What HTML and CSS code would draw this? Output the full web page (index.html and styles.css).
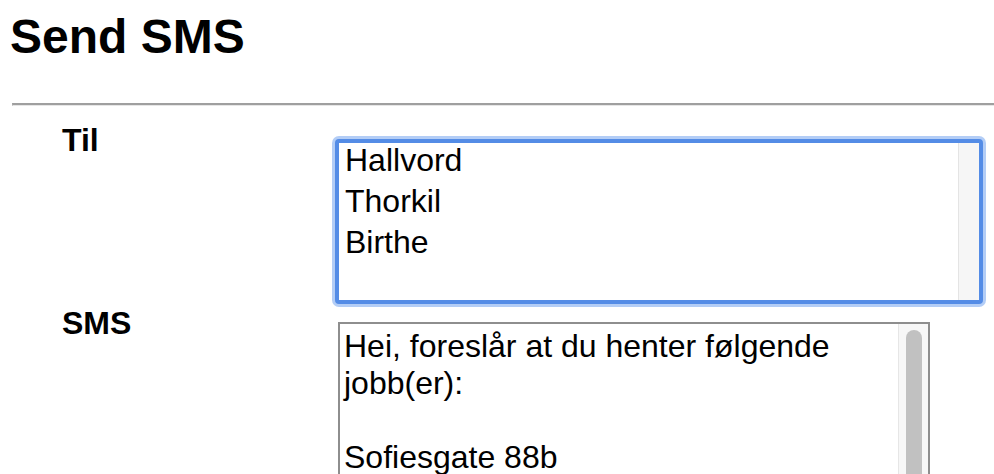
FILE: index.html
```html
<!DOCTYPE html>
<html lang="no">
<head>
<meta charset="utf-8">
<title>Send SMS</title>
<link rel="stylesheet" href="styles.css">
</head>
<body>
<h1 class="title">Send SMS</h1>
<hr class="rule">
<form class="sms-form">
  <label class="field-label" for="to">Til</label>
  <div class="listbox" id="to" role="listbox" aria-multiselectable="true" tabindex="0">
    <div class="listbox-options">
      <div class="option" role="option">Hallvord</div>
      <div class="option" role="option">Thorkil</div>
      <div class="option" role="option">Birthe</div>
    </div>
    <div class="listbox-track"></div>
  </div>
  <label class="field-label" for="sms">SMS</label>
  <div class="message-box">
    <textarea class="message" id="sms">Hei, foreslår at du henter følgende jobb(er):

Sofiesgate 88b</textarea>
    <div class="scroll-track"><div class="scroll-thumb"></div></div>
  </div>
</form>
</body>
</html>
```
FILE: styles.css
```css
html, body {
  margin: 0;
  padding: 0;
  overflow: hidden;
  background: #ffffff;
}

body {
  font-family: "Liberation Sans", Arial, Helvetica, sans-serif;
  color: #000000;
}

.title {
  margin: 9px 0 0 10px;
  font-size: 48px;
  line-height: 56px;
  font-weight: 700;
}

.rule {
  height: 0;
  margin: 38px 0 0 12px;
  border: 0;
  border-top: 2px solid #9f9f9f;
  border-bottom: 1px solid #e6e6e6;
  border-left: 1px solid #b0b0b0;
}

.sms-form {
  display: grid;
  grid-template-columns: 273px auto;
  row-gap: 1px;
  margin: 16px 0 0 62px;
  align-items: start;
  justify-items: start;
}

.field-label {
  font-size: 32px;
  line-height: 37px;
  font-weight: 700;
}

.listbox {
  box-sizing: border-box;
  display: flex;
  width: 648px;
  height: 165px;
  margin-top: 17px;
  border: 4px solid #548ce6;
  border-radius: 4px;
  box-shadow: 0 0 0 3px #b3cdf6;
  background: #ffffff;
  outline: none;
}

.listbox-options {
  flex: 1;
}

.option {
  padding: 0 5px 6px 6px;
  font-size: 32px;
  line-height: 35px;
}

.listbox-track {
  width: 20px;
  background: #f6f6f6;
  border-left: 1px solid #e4e4e4;
}

.message-box {
  box-sizing: border-box;
  display: flex;
  width: 592px;
  height: 300px;
  margin: 17px 0 0 3px;
  border: 2px solid #8e8e8e;
  background: #ffffff;
}

.message {
  flex: 1;
  min-width: 0;
  margin: 0;
  padding: 4px;
  border: 0;
  border-radius: 0;
  font-family: "Liberation Sans", Arial, Helvetica, sans-serif;
  font-size: 32px;
  line-height: normal;
  color: #000000;
  background: transparent;
  resize: none;
  overflow: hidden;
  outline: none;
}

.scroll-track {
  box-sizing: border-box;
  width: 30px;
  padding: 6px 6px 0 7px;
  background: #f7f7f7;
  border-left: 1px solid #e6e6e6;
}

.scroll-thumb {
  height: 220px;
  border-radius: 8px;
  background: #c1c1c1;
}
```
